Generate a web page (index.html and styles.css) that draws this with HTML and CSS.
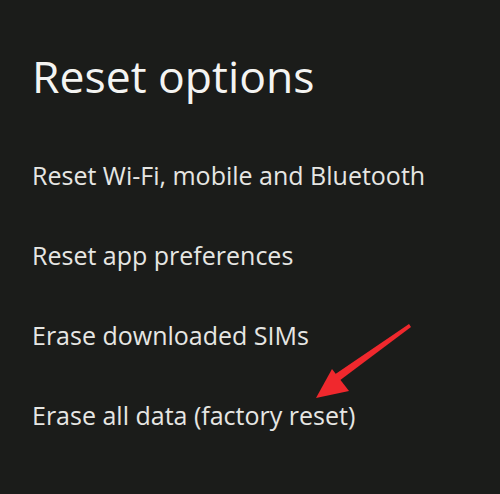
FILE: index.html
```html
<!DOCTYPE html>
<html lang="en">
<head>
<meta charset="utf-8">
<title>Reset options</title>
<link rel="stylesheet" href="styles.css">
</head>
<body>
<main class="screen">
  <h1 class="title">Reset options</h1>
  <ul class="options">
    <li class="option">Reset Wi-Fi, mobile and Bluetooth</li>
    <li class="option">Reset app preferences</li>
    <li class="option">Erase downloaded SIMs</li>
    <li class="option">Erase all data (factory reset)</li>
  </ul>
  <svg class="arrow" width="500" height="494" viewBox="0 0 500 494" aria-hidden="true">
    <polygon points="409,324 411,327 339,381 334,375" fill="#f0282d"/>
    <polygon points="316,398 332,369 349,391" fill="#f0282d"/>
  </svg>
</main>
</body>
</html>
```
FILE: styles.css
```css
html, body {
  margin: 0;
  padding: 0;
  background: #1b1c1a;
}
.screen {
  position: relative;
  width: 500px;
  height: 494px;
  box-sizing: border-box;
  padding: 50px 0 0 32px;
  font-family: "Open Sans", "Noto Sans", sans-serif;
  color: #e6e6e3;
  overflow: hidden;
}
.title {
  margin: 0 0 33px 0;
  font-size: 44.5px;
  line-height: 52px;
  font-weight: 400;
  color: #f4f4f2;
}
.options {
  list-style: none;
  margin: 0;
  padding: 0;
}
.option {
  font-size: 25px;
  line-height: 80px;
  height: 80px;
}
.arrow {
  position: absolute;
  left: 0;
  top: 0;
  pointer-events: none;
}
```
